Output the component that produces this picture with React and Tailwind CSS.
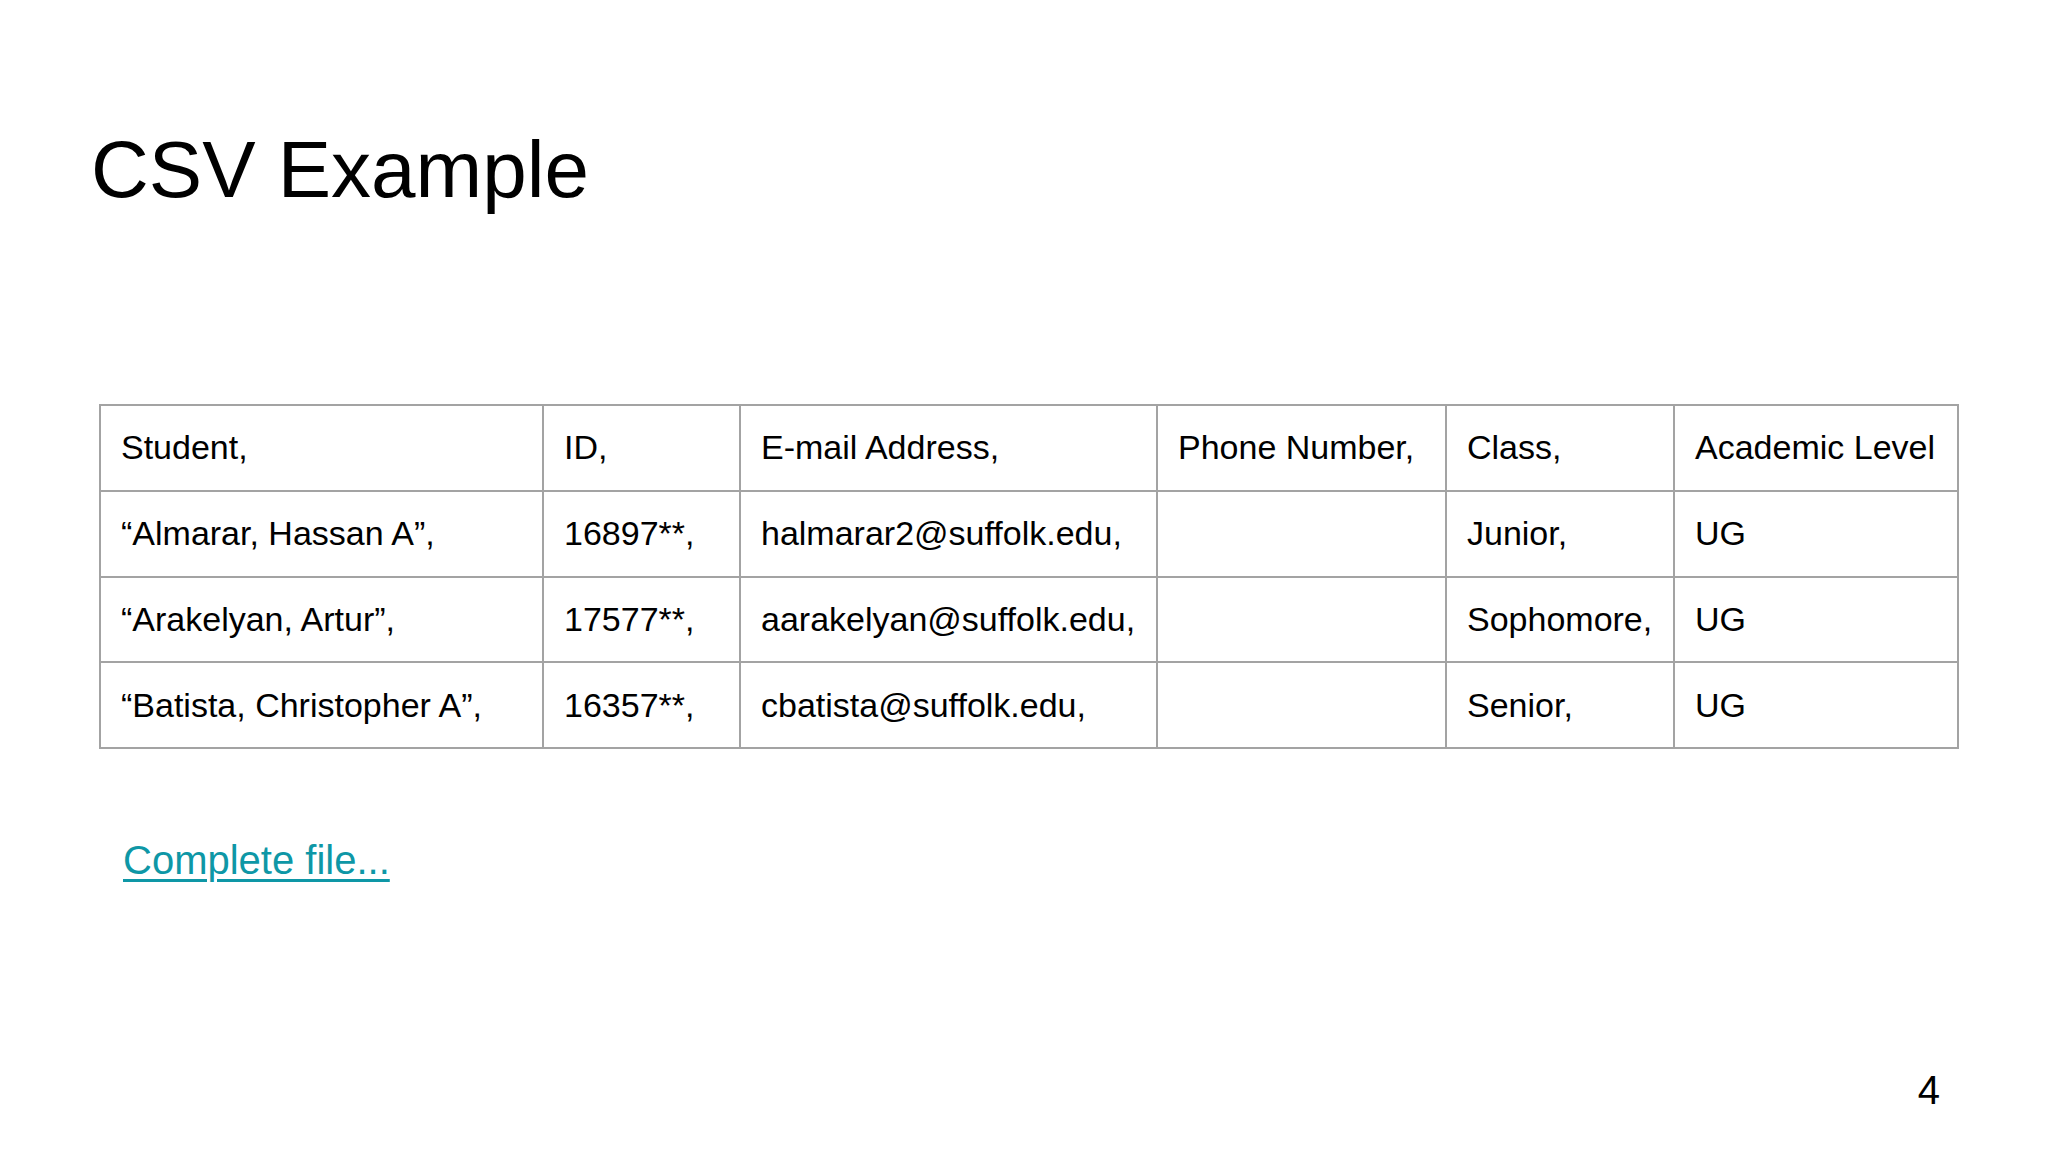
// CSV Example slide
const columns = ["Student,", "ID,", "E-mail Address,", "Phone Number,", "Class,", "Academic Level"];

const rows = [
  ["“Almarar, Hassan A”,", "16897**,", "halmarar2@suffolk.edu,", "", "Junior,", "UG"],
  ["“Arakelyan, Artur”,", "17577**,", "aarakelyan@suffolk.edu,", "", "Sophomore,", "UG"],
  ["“Batista, Christopher A”,", "16357**,", "cbatista@suffolk.edu,", "", "Senior,", "UG"],
];

function Cell({ children }) {
  return (
    <div className="flex h-[85.75px] items-center border-r-2 border-b-2 border-[#a3a3a3] pl-[20px] whitespace-nowrap">
      {children}
    </div>
  );
}

export default function App() {
  return (
    <div
      className="relative h-[1152px] w-[2048px] overflow-hidden bg-white text-black"
      style={{ fontFamily: '"Liberation Sans", Arial, sans-serif' }}
    >
      <div className="pl-[91px] pt-[130px]">
        <h1 className="text-[80px] leading-none font-normal">CSV Example</h1>
      </div>

      <div className="ml-[99px] mt-[194px] grid w-[1860px] grid-cols-[443px_197px_417px_289px_228px_284px] border-t-2 border-l-2 border-[#a3a3a3] text-[34px]">
        {columns.map((c) => (
          <Cell key={c}>{c}</Cell>
        ))}
        {rows.map((r, i) => r.map((v, j) => <Cell key={i + "-" + j}>{v}</Cell>))}
      </div>

      <div className="pl-[123px] mt-[91px]">
        <a href="#" className="text-[40px] leading-none text-[#0e97a6] underline decoration-[3px] underline-offset-[5px]">
          Complete file...
        </a>
      </div>

      <div className="mt-[189px] flex justify-end pr-[108px]">
        <span className="text-[40px] leading-none">4</span>
      </div>
    </div>
  );
}
